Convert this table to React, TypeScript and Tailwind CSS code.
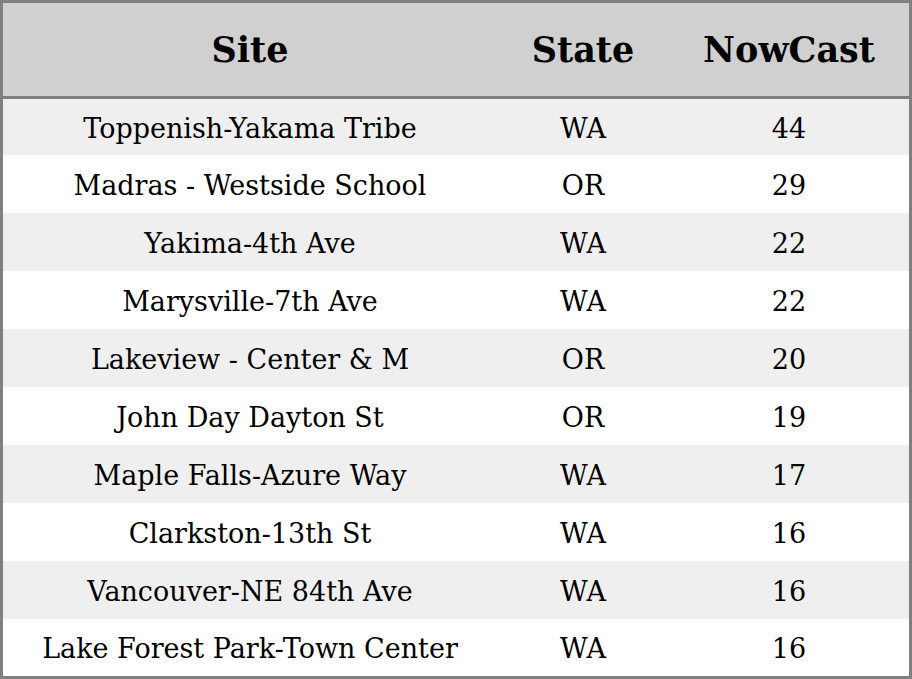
const rows: [string, string, string][] = [
  ["Toppenish-Yakama Tribe", "WA", "44"],
  ["Madras - Westside School", "OR", "29"],
  ["Yakima-4th Ave", "WA", "22"],
  ["Marysville-7th Ave", "WA", "22"],
  ["Lakeview - Center & M", "OR", "20"],
  ["John Day Dayton St", "OR", "19"],
  ["Maple Falls-Azure Way", "WA", "17"],
  ["Clarkston-13th St", "WA", "16"],
  ["Vancouver-NE 84th Ave", "WA", "16"],
  ["Lake Forest Park-Town Center", "WA", "16"],
];

const heights = ["h-[56px]", "h-[58px]", "h-[58px]", "h-[58px]", "h-[58px]", "h-[58px]", "h-[58px]", "h-[58px]", "h-[58px]", "h-[57px]"];

export default function App() {
  return (
    <div className="w-[912px] h-[679px] bg-white border-[3px] border-[#808080] text-black" style={{ fontFamily: '"DejaVu Serif", serif' }}>
      <div className="grid grid-cols-[494px_172px_240px] h-[93px] bg-[#d0d0d0] border-b-[3px] border-[#808080] box-content items-center text-[35px] leading-none font-bold">
        <div className="text-center">Site</div>
        <div className="text-center">State</div>
        <div className="text-center">NowCast</div>
      </div>
      {rows.map((r, i) => (
        <div key={i} className={`grid grid-cols-[494px_172px_240px] items-center pt-[2px] text-[27px] leading-none ${heights[i]} ${i % 2 === 0 ? "bg-[#efefef]" : "bg-white"}`}>
          <div className="text-center">{r[0]}</div>
          <div className="text-center">{r[1]}</div>
          <div className="text-center">{r[2]}</div>
        </div>
      ))}
    </div>
  );
}
